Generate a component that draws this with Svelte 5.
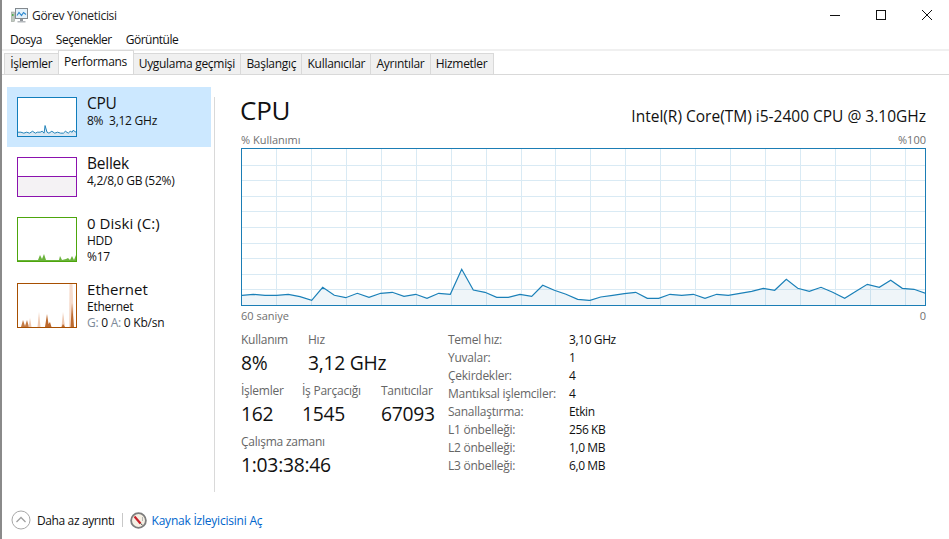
<script>
  const tabs = ['İşlemler','Performans','Uygulama geçmişi','Başlangıç','Kullanıcılar','Ayrıntılar','Hizmetler'];
  const left = [[20,124],[55,121],[90,124],[125,124],[160,121],[195,128],[230,139],[263,100],[298,124],[332,131],[367,118],[402,130],[437,118],[472,115],[507,127],[542,121],[576,133],[611,118],[646,121],[680,46],[715,108],[750,115],[785,130],[820,130],[855,121],[890,127],[923,94],[958,109],[993,121],[1028,136],[1062,139]];
  const right = [[0,139],[32,129],[68,124],[103,119],[137,115],[172,133],[206,133],[240,121],[275,124],[310,121],[345,133],[380,121],[415,124],[450,118],[485,112],[520,103],[554,109],[589,76],[623,103],[658,112],[693,100],[728,115],[764,133],[798,112],[832,91],[868,100],[902,79],[937,103],[972,106],[1006,118]];
  const pts = [...left.map(([x,y])=>[235+x/3-241, 255+y/3-150]), ...right.map(([x,y])=>[590+x/3-241, 255+y/3-150])];
  const line = pts.map(p=>p[0].toFixed(1)+','+p[1].toFixed(1)).join(' ');
  const area = `1,156 ${line} 684,156`;
  const vs = Array.from({length:19},(_, i)=>Math.round(35+i*34.93)+.5);
  const hs = Array.from({length:9},(_, i)=>Math.round(15.6*(i+1))+.5);
  const perf = [['Temel hız:','3,10 GHz'],['Yuvalar:','1'],['Çekirdekler:','4'],['Mantıksal işlemciler:','4'],['Sanallaştırma:','Etkin'],['L1 önbelleği:','256 KB'],['L2 önbelleği:','1,0 MB'],['L3 önbelleği:','6,0 MB']];
  const cpuMini = '0,36 3,36 6,37 9,36 12,37 15,35 18,37 20,36 23,36 25,35 27,37 28,29 30,36 32,37 35,35 38,37 41,36 44,37 47,37 49,35 52,37 54,35 56,36 57,34 60,36';
</script>

<div class="win">
  <header class="title">
    <svg class="appicon" width="17" height="17" viewBox="0 0 17 17">
      <rect x="0" y="5" width="3.5" height="9.5" fill="#bfc8bf" stroke="#8e968e" stroke-width=".5"/>
      <rect x="1" y="7" width="1.5" height="2" fill="#4fae4f"/>
      <rect x="4.5" y="1.5" width="12" height="10" fill="#e4f1fa" stroke="#83898e"/>
      <path d="M6 8.5 L8 5.5 L10.5 8.5 L12.5 5.5 L15 7.5" fill="none" stroke="#2b87cf" stroke-width="1.1"/>
      <rect x="9" y="12" width="3" height="2" fill="#8f9499"/>
      <rect x="6.5" y="14" width="8" height="1.5" fill="#b4b8bc"/>
    </svg>
    <span class="ttext">Görev Yöneticisi</span>
    <div class="controls">
      <svg width="10" height="10" viewBox="0 0 10 10"><path d="M0 5.5H10" stroke="#111" stroke-width="1"/></svg>
      <svg width="10" height="10" viewBox="0 0 10 10"><rect x=".5" y=".5" width="9" height="9" fill="none" stroke="#111"/></svg>
      <svg width="10" height="10" viewBox="0 0 10 10"><path d="M0 0L10 10M10 0L0 10" stroke="#111" stroke-width="1"/></svg>
    </div>
  </header>
  <nav class="menu"><span>Dosya</span><span>Seçenekler</span><span>Görüntüle</span></nav>
  <div class="tabs">
    {#each tabs as t, i}
      <div class="tab" class:active={i===1}>{t}</div>
    {/each}
  </div>

  <div class="main">
    <aside class="side">
      <div class="item sel">
        <div class="thumb cpu">
          <svg viewBox="0 0 60 40" preserveAspectRatio="none"><polygon points="0,40 {cpuMini} 60,40" fill="#d9e8f3"/><polyline points={cpuMini} fill="none" stroke="#1b80b8" stroke-width="1"/></svg>
        </div>
        <div class="itext"><div class="iname">CPU</div><div>8%&nbsp; 3,12 GHz</div></div>
      </div>
      <div class="item">
        <div class="thumb mem"><div class="memfill"></div></div>
        <div class="itext"><div class="iname">Bellek</div><div>4,2/8,0 GB (52%)</div></div>
      </div>
      <div class="item tall">
        <div class="thumb disk">
          <svg viewBox="0 0 58 43" preserveAspectRatio="none"><polygon points="0,43 0,42 12,42 18,42 20,42 22,37 24,41 26,36 28,42 34,42 40,42 41,42 42,38 44,42 48,41 50,40 52,42 54,38 56,42 58,37 58,43" fill="#6bb33c"/></svg>
        </div>
        <div class="itext"><div class="iname">0 Diski (C:)</div><div>HDD</div><div>%17</div></div>
      </div>
      <div class="item tall">
        <div class="thumb eth">
          <svg viewBox="0 0 58 43" preserveAspectRatio="none">
            <polygon points="3,43 5,36 7,42 9,36 11,43" fill="#c47b45"/>
            <polygon points="10.5,43 12,34 13.5,43" fill="#eec9b2"/>
            <polygon points="19.5,43 21,28 22.5,43" fill="#eec9b2"/>
            <polygon points="27,43 29,30 30.5,40 32,38 33.5,43" fill="#bd6a2e"/>
            <polygon points="43.5,43 45,28 47,43" fill="#eec9b2"/>
            <polygon points="43.5,43 45,40 47,43" fill="#bd6a2e"/>
            <polygon points="51,43 51.5,0 54.5,0 56,43" fill="#f6dccd"/>
            <polygon points="52.5,43 54,19 56,43" fill="#bd6a2e"/>
          </svg>
        </div>
        <div class="itext"><div class="iname">Ethernet</div><div>Ethernet</div><div><span class="gl">G:</span> 0 <span class="gl">A:</span> 0 Kb/sn</div></div>
      </div>
    </aside>

    <section class="content">
      <div class="head"><h1>CPU</h1><div class="model">Intel(R) Core(TM) i5-2400 CPU @ 3.10GHz</div></div>
      <div class="axis top"><span>% Kullanımı</span><span>%100</span></div>
      <div class="graph">
        <svg width="683" height="156" viewBox="1 0 683 156">
          {#each vs as x}<line x1={x} x2={x} y1="0" y2="156" stroke="#d9eaf4"/>{/each}
          {#each hs as y}<line x1="0" x2="685" y1={y} y2={y} stroke="#d9eaf4"/>{/each}
          <polygon points={area} fill="#176da5" fill-opacity=".07"/>
          <polyline points={line} fill="none" stroke="#1b80b8" stroke-width="1.2"/>
        </svg>
      </div>
      <div class="axis bot"><span>60 saniye</span><span>0</span></div>

      <div class="stats">
        <div class="lcol">
          <div class="srow r1">
            <div><label>Kullanım</label><b>8%</b></div>
            <div><label>Hız</label><b>3,12 GHz</b></div>
          </div>
          <div class="srow r2">
            <div><label>İşlemler</label><b>162</b></div>
            <div><label>İş Parçacığı</label><b>1545</b></div>
            <div><label>Tanıtıcılar</label><b>67093</b></div>
          </div>
          <div class="srow"><div><label>Çalışma zamanı</label><b>1:03:38:46</b></div></div>
        </div>
        <div class="rcol">
          {#each perf as [k,v]}<span class="k">{k}</span><span class="v">{v}</span>{/each}
        </div>
      </div>
    </section>
  </div>

  <footer class="foot">
    <svg width="20" height="20" viewBox="0 0 20 20"><circle cx="10" cy="10" r="9" fill="#fff" stroke="#a8a8a8" stroke-width="1"/><path d="M5.5 12L10 7.5L14.5 12" fill="none" stroke="#a0a0a0" stroke-width="1.3"/></svg>
    <span class="less">Daha az ayrıntı</span>
    <span class="sep"></span>
    <svg width="17" height="17" viewBox="0 0 17 17"><circle cx="8.5" cy="8.5" r="7.4" fill="#f5efe3" stroke="#7d7d7d" stroke-width="1.8"/><path d="M4.5 4.5L10.5 11.5" stroke="#c8202a" stroke-width="2.2"/><path d="M12.5 5V9" stroke="#b5b5b5"/><path d="M10.5 11.5L12.5 13" stroke="#444"/></svg>
    <span class="link">Kaynak İzleyicisini Aç</span>
  </footer>
</div>

<style>
  :global(body){margin:0;background:#fff;}
  .win{width:949px;height:539px;box-sizing:border-box;border-left:2px solid #8a8a8a;font-family:"Open Sans","Noto Sans",sans-serif;font-size:12px;color:#111;display:flex;flex-direction:column;overflow:hidden;letter-spacing:-.25px;}
  .title{height:30px;display:flex;align-items:center;padding-left:9px;flex:none;}
  .appicon{margin-right:2px;}
  .ttext{font-size:12px;color:#222;margin-left:2px;letter-spacing:-.3px;}
  .controls{margin-left:auto;display:flex;gap:36px;margin-right:17px;}
  .menu{height:19px;display:flex;gap:14px;padding-left:8px;align-items:center;border-bottom:2px solid #f0f0f0;flex:none;letter-spacing:-.5px;}
  .tabs{height:23px;display:flex;align-items:flex-end;padding-left:3px;border-bottom:1px solid #d9d9d9;flex:none;letter-spacing:-.3px;}
  .tab{height:20px;line-height:20px;padding:0 5.2px;background:#f0f0f0;border:1px solid #d9d9d9;border-bottom:none;margin-left:-1px;white-space:nowrap;}
  .tab.active{height:23px;line-height:21px;background:#fff;position:relative;padding:0 5.5px;}
  .main{flex:1;display:flex;min-height:0;}
  .side{width:209px;padding:12px 0 0 5px;box-sizing:border-box;flex:none;}
  .item{display:flex;height:60px;padding:10px 0 0 10px;box-sizing:border-box;gap:10px;line-height:16px;}
  .item.tall{height:66px;}
  .itext{margin-top:-1px;}
  .sel{background:#cce8ff;width:204px;}
  .thumb{width:60px;height:40px;box-sizing:border-box;border:1px solid;background:#fff;flex:none;position:relative;}
  .tall .thumb{height:45px;}
  .thumb svg{display:block;width:100%;height:100%;}
  .cpu{border-color:#117dbb;}
  .mem{border-color:#8b12ae;}
  .memfill{position:absolute;left:0;right:0;bottom:0;height:19px;background:#f4f2f4;border-top:1px solid #8b12ae;}
  .disk{border-color:#4da60c;}
  .eth{border-color:#a74f01;}
  .iname{font-size:15.5px;line-height:19px;margin-top:-2px;}
  .tall .iname{font-size:15px;letter-spacing:.05px;}
  .gl{color:#7d8a99;}
  .content{flex:1;min-width:0;border-left:1px solid #d9d9d9;margin:22px 0 9px 3px;padding:0 23px 0 26px;}
  .head{display:flex;justify-content:space-between;align-items:flex-end;height:32px;margin-top:-3px;}
  h1{font-size:26px;font-weight:400;margin:0;line-height:32px;margin-left:-1px;}
  .model{font-size:15.5px;line-height:22px;margin-bottom:-1px;letter-spacing:0;}
  .axis{display:flex;justify-content:space-between;color:#707070;font-size:11px;letter-spacing:0;}
  .axis.top{height:14px;line-height:14px;margin-top:7px;}
  .axis.bot{height:14px;line-height:14px;margin-top:3px;}
  .graph{width:685px;height:158px;box-sizing:border-box;border:1px solid #1b7db5;margin:1px 0 0 0;position:relative;}
  .graph svg{display:block;position:absolute;inset:0;}
  .stats{display:flex;margin-top:9px;}
  .lcol{width:207px;flex:none;}
  .srow{display:flex;height:51px;}
  .srow.r1{gap:20px;}
  .srow.r2>div:nth-child(1){width:61px;}
  .srow.r2>div:nth-child(2){width:79px;}
  .srow.r1>div:first-child{width:47px;}
  label{display:block;color:#666;font-size:12px;line-height:16px;}
  b{display:block;font-weight:400;font-size:19.3px;line-height:26px;margin-top:2px;}
  .rcol{display:grid;grid-template-columns:121px auto;grid-auto-rows:18px;line-height:16px;font-size:12px;align-content:start;}
  .k{color:#666;}
  .v{letter-spacing:-.4px;}
  .foot{height:38px;display:flex;align-items:center;padding-left:9px;flex:none;}
  .less{margin-left:6px;letter-spacing:-.38px;}
  .sep{width:1px;height:14px;background:#c8c8c8;margin:0 7px;}
  .link{color:#0066cc;margin-left:5px;letter-spacing:-.22px;}
</style>
